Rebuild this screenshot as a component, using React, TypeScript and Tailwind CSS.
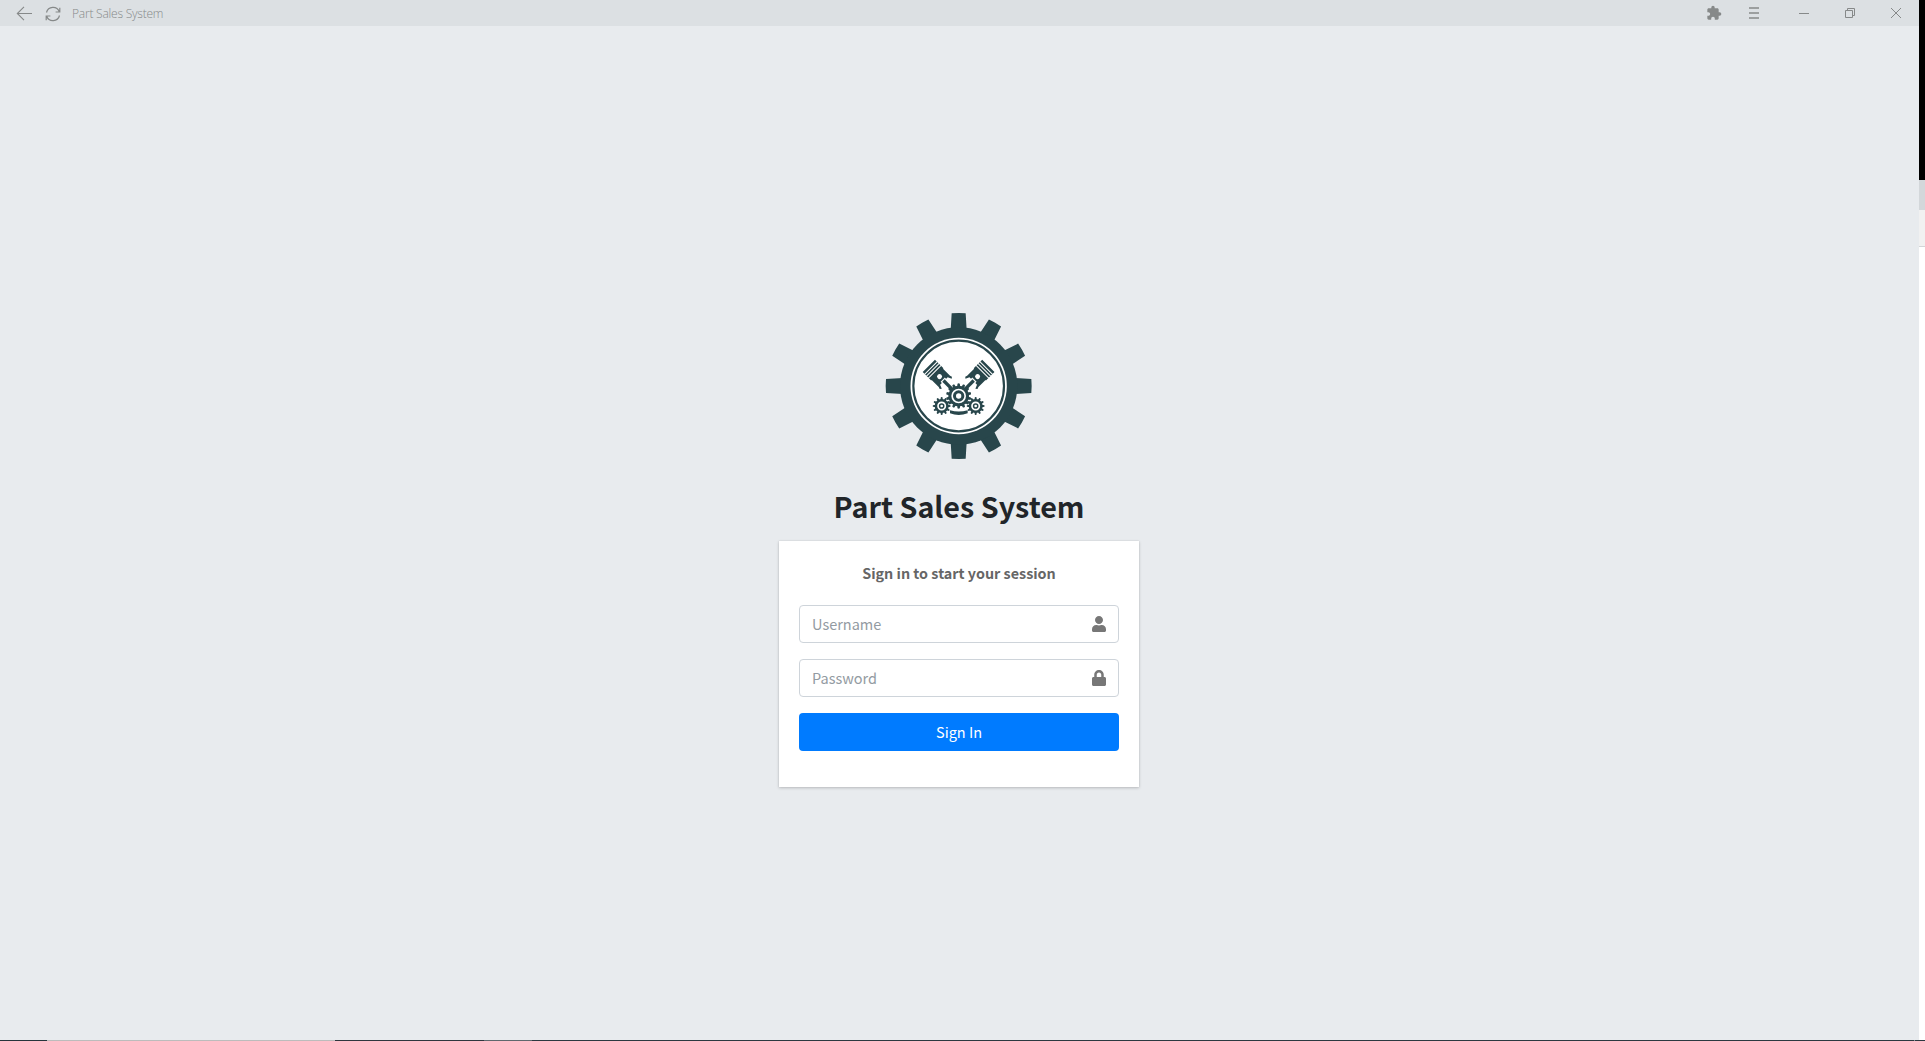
import type { ReactNode } from "react";
import { FaUser, FaLock } from "react-icons/fa";
import { MdExtension } from "react-icons/md";

const INK = "#28464b";

function gearPath(cx: number, cy: number, teeth: number, inner: number, outer: number, baseHalf: number, topHalf: number) {
  const points: string[] = [];
  for (let i = 0; i < teeth; i++) {
    const a = (i * 2 * Math.PI) / teeth;
    const at = (x: number, y: number) =>
      `${(cx + x * Math.cos(a) - y * Math.sin(a)).toFixed(2)} ${(cy + x * Math.sin(a) + y * Math.cos(a)).toFixed(2)}`;
    points.push(at(-baseHalf, -inner), at(-topHalf, -outer), at(0, -outer - 1), at(topHalf, -outer), at(baseHalf, -inner));
  }
  return `M${points.join("L")}Z`;
}

function Piston() {
  return (
    <g>
      <path d="M-26 0H26V36H24V66L26 72L21 76L16 64H-16L-21 76L-26 72L-24 66V36H-26Z" fill={INK} />
      <path d="M-27 9H27M-27 17H27M-27 25H27" stroke="#fff" strokeWidth="3" />
      <circle cx="0" cy="45.5" r="7.5" fill="#fff" />
      <path d="M-9 66V59H9V66Z" fill="#fff" />
      <path d="M-5 62H5V105H-5Z" fill={INK} />
    </g>
  );
}

function Logo() {
  return (
    <svg viewBox="30 36 444 444" className="h-[148px] w-[148px]" aria-hidden="true">
      <path d={gearPath(251, 258, 12, 168, 218, 24, 21)} fill={INK} />
      <circle cx="251" cy="258" r="176" fill={INK} />
      <circle cx="251" cy="258" r="144.5" fill="#fff" />
      <circle cx="251" cy="258" r="136" fill="none" stroke={INK} strokeWidth="6.5" />
      <g transform="translate(161.5 197.5) rotate(-45)">
        <Piston />
      </g>
      <g transform="translate(340 197.5) scale(-1 1) rotate(-45)">
        <Piston />
      </g>
      <path d={gearPath(251, 288, 14, 29, 37, 4.5, 3.5)} fill={INK} />
      <circle cx="251" cy="288" r="31" fill={INK} />
      <circle cx="251" cy="288" r="19.5" fill="none" stroke="#fff" strokeWidth="5" />
      <circle cx="251" cy="288" r="8" fill="#fff" />
      {[200, 302].map((x) => (
        <g key={x}>
          <path d={gearPath(x, 318, 12, 19, 26, 3.5, 2.5)} fill={INK} />
          <circle cx={x} cy="318" r="21" fill={INK} />
          <circle cx={x} cy="318" r="11" fill="none" stroke="#fff" strokeWidth="5" />
          <circle cx={x} cy="318" r="4" fill="#fff" />
        </g>
      ))}
      <path d="M225 331Q251 338 278 331V340Q251 350 225 340Z" fill={INK} />
    </svg>
  );
}

function TitleBar() {
  return (
    <header className="flex h-[26px] w-full shrink-0 items-center bg-[#dce0e3] text-[#868989]">
      <svg viewBox="0 0 16 16" className="mt-px ml-4 h-4 w-4" fill="none" stroke="currentColor" strokeWidth="1.1">
        <path d="M16 7.5H1.5M8 .8L1.3 7.5L8 14.2" />
      </svg>
      <svg viewBox="0 0 16 16" className="mt-px ml-[13px] h-4 w-4" fill="none" stroke="currentColor" strokeWidth="1.2">
        <path d="M1.5 6.5A6.7 6.7 0 0 1 14.3 5.8M14.8 1.8V6H10.6M14.5 9.5A6.7 6.7 0 0 1 1.7 10.2M1.2 14.2V10H5.4" />
      </svg>
      <span className="mt-[2px] ml-[11px] font-['Open_Sans',sans-serif] text-[12px] leading-4 font-light tracking-[-0.22px] whitespace-nowrap">
        Part Sales System
      </span>
      <div className="ml-auto flex items-center">
        <MdExtension className="mr-[27px] h-4 w-4" />
        <svg viewBox="0 0 10 12" className="mr-10 h-3 w-2.5" stroke="currentColor" strokeWidth="1.6">
          <path d="M0 1H10M0 6H10M0 11H10" />
        </svg>
        <svg viewBox="0 0 10 10" className="mr-9 mb-px h-2.5 w-2.5" stroke="currentColor">
          <path d="M0 5.5H10" />
        </svg>
        <svg viewBox="0 0 10 10" className="mr-9 mb-px h-2.5 w-2.5" fill="none" stroke="currentColor">
          <path d="M.5 2.5H7.5V9.5H.5ZM2.5 2.5V.5H9.5V7.5H7.5" />
        </svg>
        <svg viewBox="0 0 10 10" className="mr-[18px] mb-px h-2.5 w-2.5" stroke="currentColor">
          <path d="M0 0L10 10M10 0L0 10" />
        </svg>
      </div>
    </header>
  );
}

function Field({ type, label, children }: { type: string; label: string; children: ReactNode }) {
  return (
    <label className="mb-4 flex h-[38px] items-center rounded-[4px] border border-[#ced4da] bg-white px-3">
      <input
        type={type}
        placeholder={label}
        className="min-w-0 flex-1 bg-transparent text-[14.5px] leading-6 text-[#495057] outline-none placeholder:text-[#939ba2]"
      />
      <span className="text-[#777]">{children}</span>
    </label>
  );
}

export default function App() {
  return (
    <div className="flex h-[1041px] w-[1925px] flex-col overflow-hidden font-['Noto_Sans_CJK_SC',sans-serif]">
      <div className="flex min-h-0 flex-1">
        <div className="flex w-[1919px] flex-col bg-[#e8ebee]">
          <TitleBar />
          <main className="flex flex-1 flex-col items-center pt-[286px] pr-px">
            <Logo />
            <h1 className="mt-[25px] h-14 text-[28.7px] leading-[42px] font-bold text-[#212529]">Part Sales System</h1>
            <form className="h-[246px] w-[360px] bg-white p-5 shadow-[0_0_1px_rgba(0,0,0,.125),0_1px_3px_rgba(0,0,0,.2)]">
              <p className="mb-5 text-center text-[14.35px] leading-6 font-bold text-[#666]">Sign in to start your session</p>
              <Field type="text" label="Username">
                <FaUser className="h-4 w-[14px]" />
              </Field>
              <Field type="password" label="Password">
                <FaLock className="h-4 w-[14px]" />
              </Field>
              <button type="button" className="h-[38px] w-full rounded-[4px] bg-[#007bff] text-[14.5px] leading-6 text-white">
                Sign In
              </button>
            </form>
          </main>
        </div>
        <aside className="flex w-[6px] flex-col bg-white">
          <div className="h-[180px] bg-black" />
          <div className="h-[30px] bg-[#d3d7da]" />
          <div className="h-[37px] border-b border-[#d3d5d8] bg-[#f1f1f1]" />
        </aside>
      </div>
      <footer className="flex h-px bg-[#2c3840]">
        <div className="w-[47px] bg-[#26343b]" />
        <div className="w-[288px] bg-[#bcbcbc]" />
        <div className="w-[149px] bg-[#2f363e]" />
        <div className="w-12 bg-[#60686e]" />
        <div className="flex-1" />
        <div className="mr-[10px] w-px bg-[#8a9297]" />
      </footer>
    </div>
  );
}
